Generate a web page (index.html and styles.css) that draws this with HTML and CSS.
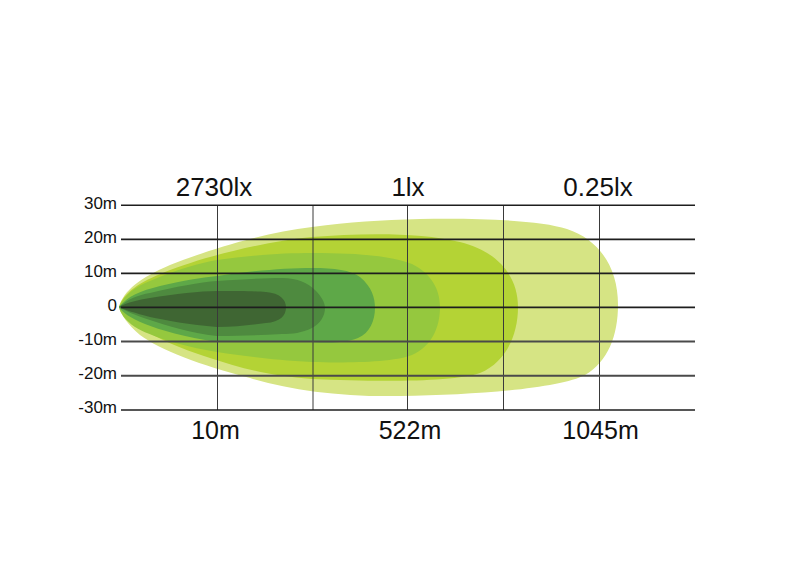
FILE: index.html
```html
<!DOCTYPE html>
<html lang="en">
<head>
<meta charset="utf-8">
<title>Beam pattern</title>
<link rel="stylesheet" href="styles.css">
</head>
<body>
<div class="page">
<svg class="chart" width="800" height="576" viewBox="0 0 800 576" xmlns="http://www.w3.org/2000/svg">
  <g class="beam">
    <path class="l1" d="M119,307 C124,290 140,278 170,265 C200,253 260,233 312,227 C350,222 380,220 420,219 C480,218 540,220 567,229 C600,240 618,268 618,305 C618,335 608,362 585,375 C560,388 480,395 400,396 C340,397 290,390 250,378 C200,365 160,350 140,335 C128,325 121,315 119,307 Z"/>
    <path class="l2" d="M119,307 C124,292 140,282 165,272 C200,258 260,242 312,237 C360,233 420,232 460,242 C500,252 518,278 518,307 C518,335 506,362 480,373 C455,382 380,382 312,379 C270,376 240,368 210,358 C170,345 135,330 119,307 Z"/>
    <path class="l3" d="M119,307 C125,294 135,287 150,281 C175,270 200,263 217,260 C250,255 285,253 312,253 C360,253 390,256 412,264 C432,274 440,290 440,307 C440,327 432,346 412,355 C392,363 340,363 312,362 C270,360 245,356 217,352 C180,346 150,336 135,327 C125,320 120,313 119,307 Z"/>
    <path class="l4" d="M119,307 C128,296 140,291 160,286 C185,280 200,278 217,276 C250,271 285,268 312,268 C335,268 350,270 360,277 C372,287 375,298 375,308 C375,320 370,333 358,338 C345,343 330,343 312,342 C280,342 245,342 217,342 C185,337 160,330 145,324 C130,318 122,312 119,307 Z"/>
    <path class="l5" d="M119,307 C128,299 138,295 150,293 C175,287 200,282 217,281 C245,279 265,278 282,278 C298,278 308,283 315,290 C322,297 325,303 325,308 C325,316 320,324 312,328 C302,333 292,334 282,334 C260,335 240,336 217,336 C190,333 165,325 150,320 C135,315 125,311 119,307 Z"/>
    <path class="l6" d="M119,307 C128,302 138,300 150,298 C175,294 200,291 217,291 C240,291 255,291 266,292 C280,293 286,300 286,307 C286,316 280,322 266,323 C250,325 235,327 217,327 C190,325 165,320 150,317 C135,313 125,310 119,307 Z"/>
  </g>
  <g class="vgrid">
    <line x1="217.5" y1="205" x2="217.5" y2="410"/>
    <line x1="313" y1="205" x2="313" y2="410"/>
    <line x1="407.5" y1="205" x2="407.5" y2="410"/>
    <line x1="503.5" y1="205" x2="503.5" y2="410"/>
    <line x1="599.5" y1="205" x2="599.5" y2="410"/>
  </g>
  <g class="hgrid">
    <line x1="121" y1="205.3" x2="695" y2="205.3"/>
    <line x1="121" y1="239.4" x2="695" y2="239.4"/>
    <line x1="121" y1="273.4" x2="695" y2="273.4"/>
    <line x1="121" y1="307.4" x2="695" y2="307.4"/>
    <line class="soft" x1="121" y1="341.6" x2="695" y2="341.6"/>
    <line class="soft" x1="121" y1="375.8" x2="695" y2="375.8"/>
    <line x1="121" y1="410" x2="695" y2="410"/>
  </g>
  <g class="ylabels">
    <text x="117" y="208.5">30m</text>
    <text x="117" y="242.6">20m</text>
    <text x="117" y="276.6">10m</text>
    <text x="117" y="310.6">0</text>
    <text x="117" y="344.8">-10m</text>
    <text x="117" y="379">-20m</text>
    <text x="117" y="413.2">-30m</text>
  </g>
  <g class="toplabels">
    <text x="214" y="196">2730lx</text>
    <text x="408" y="196">1lx</text>
    <text x="598" y="196">0.25lx</text>
  </g>
  <g class="botlabels">
    <text x="215.5" y="438.5">10m</text>
    <text x="410" y="438.5">522m</text>
    <text x="600.5" y="438.5">1045m</text>
  </g>
</svg>
</div>
</body>
</html>
```
FILE: styles.css
```css
html, body {
  margin: 0;
  padding: 0;
  background: #ffffff;
}
.page {
  width: 800px;
  height: 576px;
  overflow: hidden;
}
.chart {
  display: block;
  font-family: "Liberation Sans", Arial, sans-serif;
}
.l1 { fill: #d6e484; }
.l2 { fill: #b4d335; }
.l3 { fill: #95c83e; }
.l4 { fill: #5ea848; }
.l5 { fill: #4e8a3f; }
.l6 { fill: #3f6633; }
.vgrid line {
  stroke: #3a3a3a;
  stroke-width: 1;
}
.hgrid line {
  stroke: #1e1e1e;
  stroke-width: 1.6;
}
.hgrid line.soft {
  stroke: #4a4a4a;
  stroke-width: 2;
}
.ylabels text {
  font-size: 17px;
  fill: #111;
  text-anchor: end;
}
.toplabels text {
  font-size: 26px;
  fill: #111;
  text-anchor: middle;
}
.botlabels text {
  font-size: 25px;
  fill: #111;
  text-anchor: middle;
}
```
